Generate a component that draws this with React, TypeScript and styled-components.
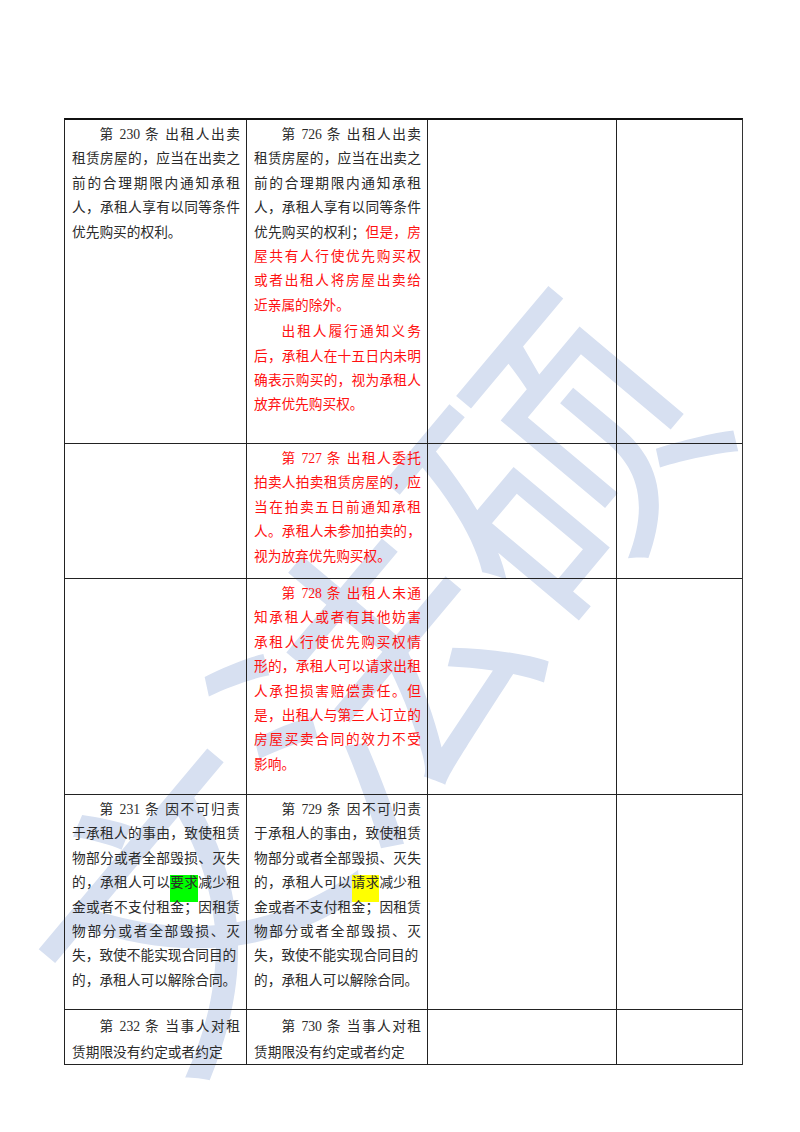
import styled, { createGlobalStyle } from 'styled-components';

type Mark = 'green' | 'yellow';
type Part = { text: string; red?: boolean; mark?: Mark };
type LineData = { parts: Part[]; indent?: boolean; fill?: boolean; gap?: boolean };
type RowData = { height: number; pad?: number; leading?: number; cells: LineData[][] };

const black = (text: string, o: Partial<LineData> = {}): LineData => ({ parts: [{ text }], fill: true, ...o });
const red = (text: string, o: Partial<LineData> = {}): LineData => ({ parts: [{ text, red: true }], fill: true, ...o });

const rows: RowData[] = [
  {
    height: 324,
    cells: [
      [
        black('第 230 条 出租人出卖', { indent: true }),
        black('租赁房屋的，应当在出卖之'),
        black('前的合理期限内通知承租'),
        black('人，承租人享有以同等条件'),
        black('优先购买的权利。', { fill: false }),
      ],
      [
        black('第 726 条 出租人出卖', { indent: true }),
        black('租赁房屋的，应当在出卖之'),
        black('前的合理期限内通知承租'),
        black('人，承租人享有以同等条件'),
        { parts: [{ text: '优先购买的权利；' }, { text: '但是，房', red: true }], fill: true },
        red('屋共有人行使优先购买权'),
        red('或者出租人将房屋出卖给'),
        red('近亲属的除外。', { fill: false }),
        red('出租人履行通知义务', { indent: true, gap: true }),
        red('后，承租人在十五日内未明'),
        red('确表示购买的，视为承租人'),
        red('放弃优先购买权。', { fill: false }),
      ],
      [],
      [],
    ],
  },
  {
    height: 135,
    cells: [
      [],
      [
        red('第 727 条 出租人委托', { indent: true }),
        red('拍卖人拍卖租赁房屋的，应'),
        red('当在拍卖五日前通知承租'),
        red('人。承租人未参加拍卖的，'),
        red('视为放弃优先购买权。', { fill: false }),
      ],
      [],
      [],
    ],
  },
  {
    height: 216,
    cells: [
      [],
      [
        red('第 728 条 出租人未通', { indent: true }),
        red('知承租人或者有其他妨害'),
        red('承租人行使优先购买权情'),
        red('形的，承租人可以请求出租'),
        red('人承担损害赔偿责任。但'),
        red('是，出租人与第三人订立的'),
        red('房屋买卖合同的效力不受'),
        red('影响。', { fill: false }),
      ],
      [],
      [],
    ],
  },
  {
    height: 215,
    cells: [
      [
        black('第 231 条 因不可归责', { indent: true }),
        black('于承租人的事由，致使租赁'),
        black('物部分或者全部毁损、灭失'),
        { parts: [{ text: '的，承租人可以' }, { text: '要求', mark: 'green' }, { text: '减少租' }], fill: true },
        black('金或者不支付租金；因租赁'),
        black('物部分或者全部毁损、灭'),
        black('失，致使不能实现合同目的', { fill: false }),
        black('的，承租人可以解除合同。', { fill: false }),
      ],
      [
        black('第 729 条 因不可归责', { indent: true }),
        black('于承租人的事由，致使租赁'),
        black('物部分或者全部毁损、灭失'),
        { parts: [{ text: '的，承租人可以' }, { text: '请求', mark: 'yellow' }, { text: '减少租' }], fill: true },
        black('金或者不支付租金；因租赁'),
        black('物部分或者全部毁损、灭'),
        black('失，致使不能实现合同目的', { fill: false }),
        black('的，承租人可以解除合同。', { fill: false }),
      ],
      [],
      [],
    ],
  },
  {
    height: 55,
    pad: 4,
    leading: 26,
    cells: [
      [black('第 232 条 当事人对租', { indent: true }), black('赁期限没有约定或者约定', { fill: false })],
      [black('第 730 条 当事人对租', { indent: true }), black('赁期限没有约定或者约定', { fill: false })],
      [],
      [],
    ],
  },
];

const App = () => {
  return (
    <>
      <GlobalStyle />
      <Page>
        <WatermarkLayer aria-hidden>
          <Watermark>文法硕</Watermark>
        </WatermarkLayer>
        <Table>
          {rows.map((row, r) => (
            <Row key={r} $height={row.height}>
              {row.cells.map((cell, c) => (
                <Cell key={c} $pad={row.pad ?? 3} $leading={row.leading ?? 24.4}>
                  {cell.map((line, i) => (
                    <Line key={i} $fill={line.fill} $indent={line.indent} $gap={line.gap}>
                      {line.parts.map((part, p) =>
                        part.mark ? (
                          <Highlight key={p} $mark={part.mark}>
                            {part.text}
                          </Highlight>
                        ) : (
                          <Text key={p} $red={part.red}>
                            {part.text}
                          </Text>
                        ),
                      )}
                    </Line>
                  ))}
                </Cell>
              ))}
            </Row>
          ))}
        </Table>
      </Page>
    </>
  );
};

const GlobalStyle = createGlobalStyle`
  html, body {
    margin: 0;
    padding: 0;
    background: #ffffff;
  }
`;

const Page = styled.div`
  position: relative;
  width: 800px;
  height: 1132px;
  box-sizing: border-box;
  padding: 118px 0 0 64px;
  overflow: hidden;
  background: #ffffff;
`;

const WatermarkLayer = styled.div`
  position: absolute;
  inset: 0;
  overflow: hidden;
  pointer-events: none;
  user-select: none;
`;

const Watermark = styled.div`
  position: absolute;
  left: -140px;
  top: 525px;
  width: 1000px;
  line-height: 290px;
  font-size: 290px;
  font-weight: 400;
  font-family: 'Noto Sans CJK SC', sans-serif;
  text-align: center;
  color: #d7e0f1;
  transform: rotate(-50deg);
  white-space: nowrap;
`;

const Table = styled.div`
  position: relative;
  z-index: 1;
  width: 679px;
  box-sizing: border-box;
  border-top: 2px solid #111;
  border-left: 1px solid #222;
  border-right: 1px solid #333;
`;

const Row = styled.div<{ $height: number }>`
  display: grid;
  grid-template-columns: 182px 181px 189px 125px;
  grid-template-rows: minmax(0, 1fr);
  height: ${(p) => p.$height}px;
  box-sizing: border-box;
  border-bottom: 1px solid #222;
`;

const Cell = styled.div<{ $pad: number; $leading: number }>`
  box-sizing: border-box;
  min-height: 0;
  padding: ${(p) => p.$pad}px 6px 0 7px;
  border-right: 1px solid #222;
  font-family: 'Liberation Serif', 'Noto Sans CJK SC', serif;
  font-size: 13.7px;
  line-height: ${(p) => p.$leading}px;
  color: #2a2a2a;

  &:last-child {
    border-right: none;
  }
`;

const Line = styled.div<{ $fill?: boolean; $indent?: boolean; $gap?: boolean }>`
  text-align: justify;
  text-align-last: ${(p) => (p.$fill ? 'justify' : 'left')};
  text-indent: ${(p) => (p.$indent ? '2em' : '0')};
  margin-top: ${(p) => (p.$gap ? '2px' : '0')};
`;

const Text = styled.span<{ $red?: boolean }>`
  color: ${(p) => (p.$red ? '#ff1010' : 'inherit')};
`;

const Highlight = styled.span<{ $mark: Mark }>`
  padding-bottom: 12px;
  background: ${(p) => (p.$mark === 'green' ? '#00ff00' : '#ffff00')};
`;

export default App;
